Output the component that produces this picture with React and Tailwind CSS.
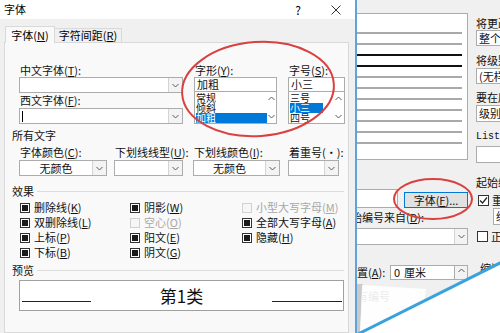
import React from "react";

const Mn = ({ t, k, c = "" }) => (
  <span className="whitespace-nowrap">
    {t}(<span className="underline underline-offset-1">{k}</span>){c}
  </span>
);

const Chevron = ({ up }) => (
  <svg width="7" height="5" viewBox="0 0 7 5" className="block">
    <path
      d={up ? "M0.5 4L3.5 1L6.5 4" : "M0.5 1L3.5 4L6.5 1"}
      fill="none"
      stroke="#5a5a5a"
      strokeWidth="1"
    />
  </svg>
);

const Combo = ({ w, text, center, caret }) => (
  <div className={`${w} h-[16px] border border-[#acacac] bg-white flex`}>
    <div
      className={`flex-1 flex items-center px-[2px] text-[11px] leading-none ${
        center ? "justify-center" : ""
      }`}
    >
      {caret && <span className="w-px h-[11px] bg-black" />}
      {text}
    </div>
    <div className="w-[14px] border-l border-[#d4d4d4] bg-[#f3f3f3] flex items-center justify-center">
      <Chevron />
    </div>
  </div>
);

const ListBox = ({ items, sel, hl }) => (
  <div className="h-[32px] border border-t-0 border-[#acacac] bg-white flex">
    <div className="flex-1 flex flex-col pt-px pl-px">
      {items.map((it, i) => (
        <div key={it} className="h-[10px] overflow-hidden flex">
          {i === sel ? (
            <span className={`h-[10px] flex items-center bg-[#0078d7] text-white text-[10px] leading-none ${hl}`}>{it}</span>
          ) : (
            <span className="h-[10px] flex items-center text-[10px] leading-none">{it}</span>
          )}
        </div>
      ))}
    </div>
    <div className="w-[12px] flex flex-col justify-between items-center py-[4px]">
      <Chevron up />
      <Chevron />
    </div>
  </div>
);

const Check = ({ label, k, disabled }) => (
  <div
    className={`h-[15px] flex items-center gap-[4px] text-[11px] ${
      disabled ? "text-[#a8a8a8]" : "text-[#111]"
    }`}
  >
    <span
      className={`w-[10px] h-[10px] border flex items-center justify-center ${
        disabled ? "border-[#d0d0d0] bg-[#f6f6f6]" : "border-[#333] bg-white"
      }`}
    >
      {!disabled && <span className="w-[6px] h-[6px] bg-[#1a1a1a]" />}
    </span>
    <Mn t={label} k={k} />
  </div>
);

const Section = ({ title, line }) => (
  <div className="h-[14px] flex items-center pl-[7px] pr-[4px] gap-[3px] text-[11px]">
    <span>{title}</span>
    {line && <span className="flex-1 h-px bg-[#dcdcdc]" />}
  </div>
);

const FontDialog = () => (
  <div className="w-[357px] h-full flex flex-col border-r-2 border-[#5fa3dc] bg-[#f0f0f0]">
    <div className="h-[19px] bg-white flex items-center pl-[4px] text-[11px]">
      <span>字体</span>
      <span className="ml-auto w-[20px] text-center text-[12px]">?</span>
      <span className="ml-[18px] mr-[9px] w-[20px] flex justify-center">
        <svg width="10" height="10" viewBox="0 0 10 10">
          <path d="M0.5 0.5L9.5 9.5M9.5 0.5L0.5 9.5" stroke="#333" strokeWidth="1" />
        </svg>
      </span>
    </div>

    <div className="flex-1 flex flex-col px-[4px] pt-[7px]">
      <div className="flex items-end pl-px text-[11px]">
        <div className="relative z-10 -mb-px w-[50px] h-[17px] border border-b-0 border-[#d9d9d9] bg-[#f9f9f9] flex items-center justify-center">
          <Mn t="字体" k="N" />
        </div>
        <div className="w-[67px] h-[14px] border border-l-0 border-b-0 border-[#d9d9d9] bg-[#f0f0f0] flex items-center justify-center">
          <Mn t="字符间距" k="R" />
        </div>
      </div>

      <div className="w-[345px] flex-1 border border-[#d9d9d9] bg-[#f9f9f9] pt-[20px] text-[#111]">
        <div className="flex pl-[14px]">
          <div className="w-[164px] flex flex-col text-[11px]">
            <div className="h-[14px] leading-[14px] pl-px">
              <Mn t="中文字体" k="T" c=":" />
            </div>
            <Combo w="w-[164px]" text="" />
            <div className="h-[15px] leading-[15px] pl-px">
              <Mn t="西文字体" k="F" c=":" />
            </div>
            <Combo w="w-[164px]" text="" caret />
          </div>

          <div className="ml-[11px] w-[83px] flex flex-col text-[11px]">
            <div className="h-[14px] leading-[14px] pl-px">
              <Mn t="字形" k="Y" c=":" />
            </div>
            <div className="h-[15px] border border-[#acacac] bg-white flex items-center px-[2px]">加粗</div>
            <ListBox items={["常规", "倾斜", "加粗"]} sel={2} hl="w-[71px]" />
          </div>

          <div className="ml-[11px] w-[57px] flex flex-col text-[11px]">
            <div className="h-[14px] leading-[14px] pl-px">
              <Mn t="字号" k="S" c=":" />
            </div>
            <div className="h-[15px] border border-[#acacac] bg-white flex items-center px-[2px]">小三</div>
            <ListBox items={["三号", "小三", "四号"]} sel={1} hl="w-[33px]" />
          </div>
        </div>

        <div className="mt-[4px]">
          <Section title="所有文字" />
        </div>

        <div className="flex pl-[14px] mt-[3px] text-[11px]">
          <div className="w-[88px] flex flex-col">
            <div className="h-[15px] leading-[15px] pl-px">
              <Mn t="字体颜色" k="C" c=":" />
            </div>
            <Combo w="w-[88px]" text="无颜色" center />
          </div>
          <div className="ml-[7px] w-[69px] flex flex-col">
            <div className="h-[15px] leading-[15px] pl-px">
              <Mn t="下划线线型" k="U" c=":" />
            </div>
            <Combo w="w-[69px]" text="" />
          </div>
          <div className="ml-[10px] w-[87px] flex flex-col">
            <div className="h-[15px] leading-[15px] pl-px">
              <Mn t="下划线颜色" k="I" c=":" />
            </div>
            <Combo w="w-[87px]" text="无颜色" center />
          </div>
          <div className="ml-[8px] w-[51px] flex flex-col">
            <div className="h-[15px] leading-[15px] pl-px whitespace-nowrap">着重号(·):</div>
            <Combo w="w-[51px]" text="" />
          </div>
        </div>

        <div className="mt-[8px]">
          <Section title="效果" line />
        </div>

        <div className="mt-[2px] pl-[15px] grid grid-cols-[110px_112px_1fr]">
          <Check label="删除线" k="K" />
          <Check label="阴影" k="W" />
          <Check label="小型大写字母" k="M" disabled />
          <Check label="双删除线" k="L" />
          <Check label="空心" k="O" disabled />
          <Check label="全部大写字母" k="A" />
          <Check label="上标" k="P" />
          <Check label="阳文" k="E" />
          <Check label="隐藏" k="H" />
          <Check label="下标" k="B" />
          <Check label="阴文" k="G" />
        </div>

        <div className="mt-[3px]">
          <Section title="预览" line />
        </div>

        <div className="ml-[14px] mt-[3px] w-[325px] h-[31px] bg-white border border-[#a0a0a0] relative flex items-center justify-center">
          <span className="text-[17px] leading-none">第1类</span>
          <span className="absolute left-[2px] top-[20px] w-[69px] h-px bg-[#222]" />
          <span className="absolute right-[1px] top-[20px] w-[70px] h-px bg-[#222]" />
        </div>
      </div>
    </div>
  </div>
);

const lines = [0, 1, 2, 3, 4, 5, 6, 7, 8, 9, 10];

const BackWindow = () => (
  <div className="flex-1 h-full overflow-hidden bg-[#f0f0f0] flex text-[11px] text-[#111]">
    <div className="w-[111px] shrink-0 flex flex-col">
      <div className="mt-[13px] h-[147px] bg-white border-y border-r border-[#acacac] pt-[18px] pr-[5px] flex flex-col">
        {lines.map((i) => (
          <div key={i} className="h-[11px]">
            <div className={`h-[2px] ${i === 2 || i === 3 ? "bg-[#111]" : "bg-[#a9a9a9]"}`} />
          </div>
        ))}
      </div>

      <div className="mt-[29px] flex items-start">
        <div className="w-[41px] h-[19px] bg-white border-y border-r border-[#acacac]" />
        <div className="ml-[6px] mt-[3px] w-[64px] h-[16px] border border-[#0078d7] bg-[#e1e1e1] flex items-center justify-center">
          <Mn t="字体" k="F" c="..." />
        </div>
      </div>

      <div className="mt-[3px] h-[12px] leading-[12px] -ml-[6px] whitespace-nowrap">
        <Mn t="始编号来自" k="D" c=":" />
      </div>

      <div className="mt-[5px] h-[17px] bg-white border-y border-r border-[#acacac] flex justify-end">
        <div className="w-[13px] border-l border-[#d4d4d4] bg-[#f3f3f3] flex items-center justify-center">
          <Chevron />
        </div>
      </div>

      <div className="mt-[20px] h-[15px] flex items-center">
        <span className="w-[33px] whitespace-nowrap">
          <Mn t="置" k="A" c=":" />
        </span>
        <div className="w-[65px] h-[15px] bg-white border border-[#acacac] flex items-center px-[3px] gap-[4px]">
          <span>0</span>
          <span>厘米</span>
        </div>
        <div className="w-[13px] h-[15px] bg-[#f3f3f3] border-y border-r border-[#acacac] flex items-start justify-center pt-[2px]">
          <Chevron up />
        </div>
      </div>

      <div className="mt-[10px] h-[12px] leading-[12px] whitespace-nowrap text-[#555]">有编号</div>
    </div>

    <div className="ml-[8px] flex-1 flex flex-col whitespace-nowrap">
      <div className="mt-[17px] h-[12px] leading-[12px]">将更改应用于</div>
      <div className="mt-px h-[16px] bg-white border border-[#acacac] px-[2px] flex items-center">整个列表</div>
      <div className="mt-[8px] h-[12px] leading-[12px]">将级别链接到样式</div>
      <div className="mt-[2px] h-[16px] bg-white border border-[#acacac] px-[2px] flex items-center">(无样式)</div>
      <div className="mt-[7px] h-[12px] leading-[12px]">要在库中显示的级别</div>
      <div className="mt-[2px] h-[17px] bg-white border border-[#acacac] px-[2px] flex items-center">级别 1</div>
      <div className="mt-[9px] h-[12px] leading-[12px] font-['Liberation_Mono',monospace] text-[10px]">ListNum</div>
      <div className="mt-[3px] h-[17px] bg-white border border-[#acacac]" />
      <div className="mt-[13px] h-[12px] leading-[12px]">起始编号</div>
      <div className="mt-[5px] h-[14px] flex items-center gap-[3px] pl-[2px]">
        <span className="w-[11px] h-[11px] border border-[#333] bg-white flex items-center justify-center">
          <svg width="9" height="9" viewBox="0 0 9 9">
            <path d="M1 4.5L3.5 7L8 1.5" fill="none" stroke="#222" strokeWidth="1.2" />
          </svg>
        </span>
        <span>重新开始列表</span>
      </div>
      <div className="mt-px ml-[17px] h-[17px] bg-white border border-[#acacac] px-[2px] flex items-center">级别</div>
      <div className="mt-[4px] h-[14px] flex items-center gap-[3px] pl-px">
        <span className="w-[11px] h-[11px] border border-[#333] bg-white" />
        <span>正规形式编号</span>
      </div>
      <div className="mt-[19px] h-[12px] leading-[12px] pl-[4px]">缩进</div>
    </div>
  </div>
);

export default function App() {
  return (
    <div className="relative w-[500px] h-[333px] overflow-hidden flex bg-[#f0f0f0] font-['Noto_Sans_CJK_SC','Liberation_Sans',sans-serif]">
      <FontDialog />
      <BackWindow />

      <svg className="absolute inset-0 pointer-events-none" width="500" height="333" viewBox="0 0 500 333">
        <ellipse cx="258" cy="89" rx="76" ry="47" fill="none" stroke="#d8413f" strokeWidth="2" transform="rotate(-4 258 89)" />
        <ellipse cx="433" cy="199" rx="39" ry="20" fill="none" stroke="#d8413f" strokeWidth="2" />
        <polygon points="357,284 363,284 360,333 357,333" fill="#c9c9c9" />
        <polygon points="362,285 426,289 424,302 360,333" fill="#ffffff" fillOpacity="0.88" />
        <polygon points="359,334 501,262 501,334" fill="#ffffff" />
        <line x1="358" y1="334" x2="502" y2="262" stroke="#3aa2dc" strokeWidth="3" />
      </svg>
    </div>
  );
}
